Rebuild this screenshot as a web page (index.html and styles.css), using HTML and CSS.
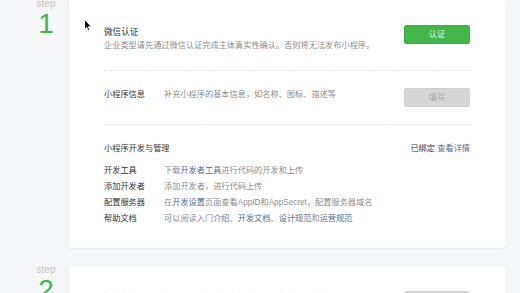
FILE: index.html
```html
<!DOCTYPE html>
<html>
    <head>
        <title>小程序发布流程</title>
        <link rel="stylesheet" href="styles.css">
    </head>
    <body>
        <div class="page">
            <!-- step 1 -->
            <div class="step_row">
                <div class="step">
                    <div class="step_label">step</div>
                    <div class="step_num">1</div>
                </div>
                <div class="card">
                    <div class="section section_first">
                        <div class="section_text">
                            <div class="title">微信认证</div>
                            <div class="desc">企业类型请先通过微信认证完成主体真实性确认。否则将无法发布小程序。</div>
                        </div>
                        <a class="btn btn_primary">认证</a>
                    </div>
                    <div class="section">
                        <div class="section_text inline">
                            <div class="label">小程序信息</div>
                            <div class="desc">补充小程序的基本信息，如名称、图标、描述等</div>
                        </div>
                        <a class="btn btn_disabled">填写</a>
                    </div>
                    <div class="section section_last">
                        <div class="section_head">
                            <div class="label">小程序开发与管理</div>
                            <div class="status">已绑定 <a class="link">查看详情</a></div>
                        </div>
                        <ul class="info_list">
                            <li><span class="label">开发工具</span><span class="desc">下载<a class="link">开发者工具</a>进行代码的开发和上传</span></li>
                            <li><span class="label">添加开发者</span><span class="desc">添加开发者，进行代码上传</span></li>
                            <li><span class="label">配置服务器</span><span class="desc">在<a class="link">开发设置</a>页面查看AppID和AppSecret，配置服务器域名</span></li>
                            <li><span class="label">帮助文档</span><span class="desc">可以阅读入门<a class="link">介绍</a>、<a class="link">开发文档</a>、<a class="link">设计规范</a>和<a class="link">运营规范</a></span></li>
                        </ul>
                    </div>
                </div>
            </div>

            <!-- step 2 -->
            <div class="step_row">
                <div class="step">
                    <div class="step_label">step</div>
                    <div class="step_num">2</div>
                </div>
                <div class="card">
                    <div class="section section_first">
                        <div class="section_text inline">
                            <div class="label">提交审核</div>
                            <div class="desc">完成小程序开发后，提交代码至微信团队审核</div>
                        </div>
                        <a class="btn btn_disabled">提交审核</a>
                    </div>
                </div>
            </div>
        </div>

        <!-- mouse pointer in the shot -->
        <svg class="cursor" width="8" height="13" viewBox="0 0 8 13">
            <path d="M0.5 0.5 L0.5 10.5 L2.8 8.3 L4.4 12 L5.9 11.3 L4.4 7.8 L7.5 7.8 Z" fill="#000" stroke="#fff" stroke-width="1"/>
        </svg>
    </body>
</html>
```

FILE: styles.css
```css
body {
    margin: 0;
    background-color: #f5f6f8;
    font-family: "Liberation Sans", "Noto Sans CJK SC", sans-serif;
    font-size: 8.2px;
    color: #353535;
    overflow: hidden;
}
a {
    text-decoration: none;
}
.page {
    position: relative;
}
.step_row {
    display: flex;
    margin-bottom: 18px;
}
.step {
    width: 46px;
    padding-left: 23px;
    text-align: center;
}
.step_label {
    font-size: 10px;
    line-height: 12px;
    color: #c4c4c4;
    margin-top: -2px;
}
.step_num {
    font-size: 28px;
    line-height: 28px;
    color: #44b549;
}
.card {
    flex: 1;
    margin-right: 15px;
    padding: 0 35px;
    background-color: #fff;
    border-radius: 3px;
    box-shadow: 0 1px 2px rgba(0, 0, 0, 0.06);
}
.section {
    display: flex;
    justify-content: space-between;
    align-items: flex-start;
    padding: 17px 0;
    border-bottom: 1px dashed #e7e7eb;
    line-height: 14px;
}
.section_first {
    padding-top: 25px;
}
.section_last {
    display: block;
    border-bottom: none;
    padding-bottom: 21px;
}
.title {
    font-size: 8.6px;
    color: #353535;
}
.desc {
    color: #8d8d8d;
}
.inline {
    display: flex;
}
.inline .label {
    width: 60px;
}
.btn {
    display: block;
    box-sizing: border-box;
    width: 66px;
    height: 19px;
    line-height: 17px;
    text-align: center;
    border-radius: 2px;
    font-size: 8.2px;
}
.btn_primary {
    background-color: #44b549;
    border: 1px solid #3fae45;
    color: #e8f5e8;
}
.btn_disabled {
    background-color: #d6d6d6;
    border: 1px solid #d0d0d0;
    color: #a6a6a6;
}
.section_head {
    display: flex;
    justify-content: space-between;
    width: 100%;
}
.status {
    color: #353535;
}
.link {
    color: #576b95;
}
.info_list {
    list-style: none;
    margin: 7px 0 0 0;
    padding: 0;
}
.info_list li {
    display: flex;
    line-height: 16px;
}
.info_list .label {
    width: 60px;
}
.cursor {
    position: absolute;
    left: 84px;
    top: 19px;
}
```
